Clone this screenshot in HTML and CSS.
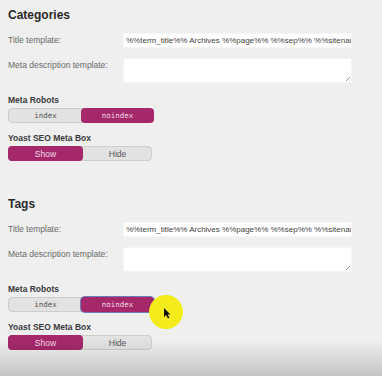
FILE: index.html
```html
<!DOCTYPE html>
<html lang="en">

<head>
	<meta charset="UTF-8">
	<meta name="viewport" content="width=device-width, initial-scale=1.0">
	<title>Taxonomies</title>
	<link rel="stylesheet" href="styles.css">
</head>

<body>
	<div class="section">
		<h2 class="section-title">Categories</h2>
		<div class="field">
			<span class="field-label">Title template:</span>
			<div class="text-input">%%term_title%% Archives %%page%% %%sep%% %%sitename%%</div>
		</div>
		<div class="field">
			<span class="field-label">Meta description template:</span>
			<div class="text-area"><span class="grip"></span></div>
		</div>
		<div class="switch-group">
			<span class="switch-label">Meta Robots</span>
			<div class="switch mono">
				<span class="switch-option">index</span>
				<span class="switch-option active">noindex</span>
			</div>
		</div>
		<div class="switch-group">
			<span class="switch-label">Yoast SEO Meta Box</span>
			<div class="switch">
				<span class="switch-option active">Show</span>
				<span class="switch-option">Hide</span>
			</div>
		</div>
	</div>

	<div class="section tags">
		<h2 class="section-title">Tags</h2>
		<div class="field">
			<span class="field-label">Title template:</span>
			<div class="text-input">%%term_title%% Archives %%page%% %%sep%% %%sitename%%</div>
		</div>
		<div class="field">
			<span class="field-label">Meta description template:</span>
			<div class="text-area"><span class="grip"></span></div>
		</div>
		<div class="switch-group">
			<span class="switch-label">Meta Robots</span>
			<div class="switch mono">
				<span class="switch-option">index</span>
				<span class="switch-option active focus">noindex</span>
				<span class="cursor-spot">
					<svg width="8" height="11" viewBox="0 0 8 11"><path d="M1 0 L1 9 L3 7 L5 10.5 L6.5 9.8 L4.6 6.5 L7.5 6.5 Z" fill="#111"/></svg>
				</span>
			</div>
		</div>
		<div class="switch-group">
			<span class="switch-label">Yoast SEO Meta Box</span>
			<div class="switch">
				<span class="switch-option active">Show</span>
				<span class="switch-option">Hide</span>
			</div>
		</div>
	</div>

	<div class="shade"></div>
</body>

</html>
```

FILE: styles.css
```css
* {
	box-sizing: border-box;
}

body {
	margin: 0;
	height: 376px;
	overflow: hidden;
	position: relative;
	background: #efefef;
	font-family: "Liberation Sans", Arial, sans-serif;
	color: #555;
	padding: 7px 0 0 8px;
}

.section {
	display: flex;
	flex-direction: column;
}

.tags {
	margin-top: 25px;
}

.section-title {
	margin: 0 0 10px;
	font-size: 12px;
	line-height: 16px;
	font-weight: bold;
	color: #2a2a2a;
}

.field {
	display: grid;
	grid-template-columns: 115px 229px;
	align-items: start;
	margin-bottom: 10px;
}

.field-label {
	font-size: 8.5px;
	line-height: 15px;
	color: #6a6a6a;
}

.text-input {
	height: 15px;
	background: #fff;
	border: 1px solid #f6f6f6;
	font-size: 8px;
	line-height: 13px;
	color: #444;
	padding: 0 2px;
	white-space: nowrap;
	overflow: hidden;
}

.text-area {
	height: 25px;
	background: #fff;
	border: 1px solid #f4f4f4;
	position: relative;
}

.grip {
	position: absolute;
	right: 1px;
	bottom: 1px;
	width: 4px;
	height: 4px;
	background: linear-gradient(135deg, transparent 45%, #999 50%, transparent 60%, transparent 75%, #999 80%, transparent 90%);
}

.switch-group {
	display: flex;
	flex-direction: column;
	margin-bottom: 10px;
}

.field + .switch-group {
	margin-top: 2px;
}

.switch-label {
	font-size: 8.5px;
	line-height: 11px;
	font-weight: bold;
	color: #3a3a3a;
	margin-bottom: 2px;
}

.switch {
	position: relative;
	display: grid;
	grid-template-columns: 73px 71px;
	width: 144px;
	height: 15px;
	background: #e2e2e2;
	border: 1px solid #cdcdcd;
	border-radius: 4px;
}

.switch-option {
	display: flex;
	justify-content: center;
	align-items: center;
	font-size: 8.5px;
	color: #555;
}

.mono .switch-option {
	font-family: "DejaVu Sans Mono", "Liberation Mono", monospace;
	font-size: 7.5px;
}

.switch-option.active {
	background: #a4286a;
	color: #f3dbe8;
	border-radius: 4px;
	margin: -1px;
}

.switch-option.focus {
	box-shadow: 0 0 0 1px #6a7db8;
}

.cursor-spot {
	position: absolute;
	left: 140px;
	top: -3px;
	width: 34px;
	height: 34px;
	border-radius: 50%;
	background: #f3ec1a;
	display: flex;
	justify-content: center;
	align-items: center;
}

.cursor-spot svg {
	margin: 2px 0 0 2px;
}

.shade {
	position: absolute;
	left: 0;
	right: 0;
	bottom: 0;
	height: 36px;
	background: linear-gradient(to bottom, rgba(0, 0, 0, 0), rgba(0, 0, 0, 0.18));
}
```
